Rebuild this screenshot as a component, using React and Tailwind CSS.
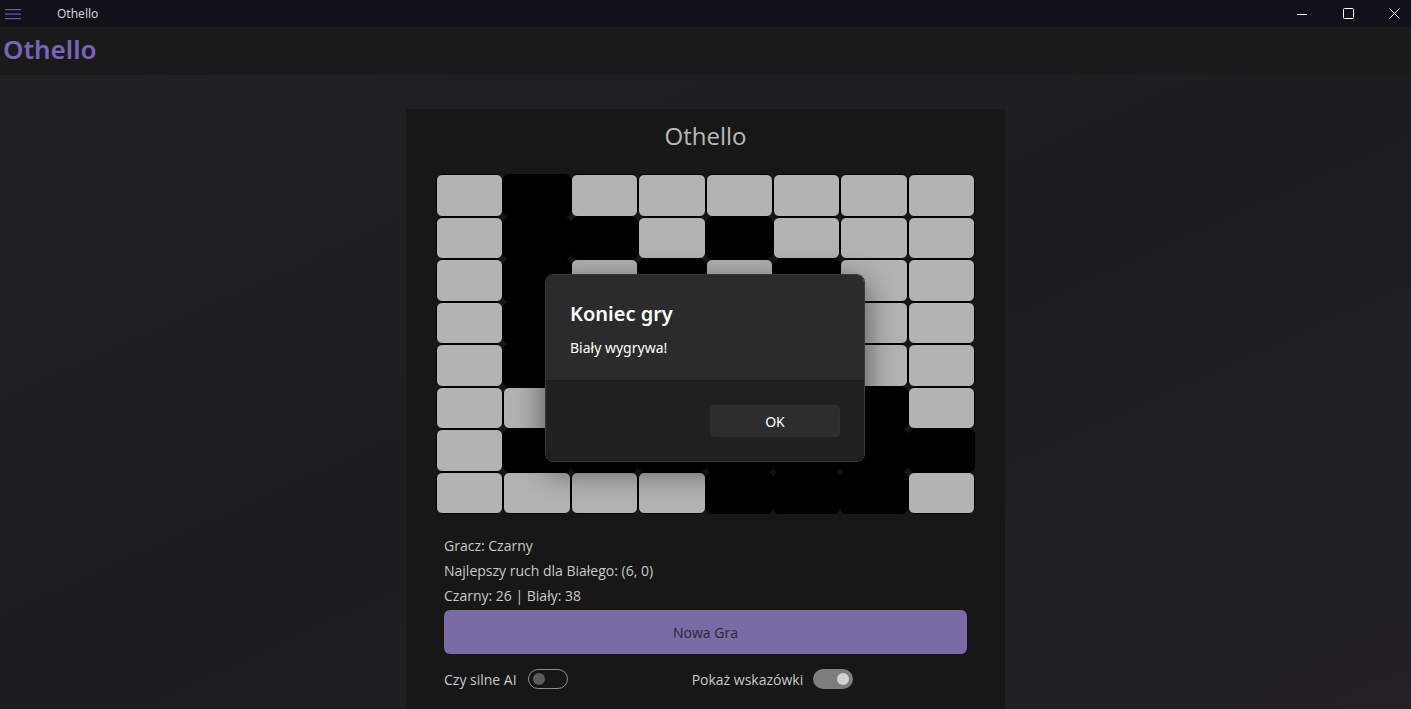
import React from "react";

const BOARD = [
  "wbwwwwww",
  "wbbwbwww",
  "wbwbwbww",
  "wbwwbwww",
  "wbwbwbww",
  "wwbwbwbw",
  "wbbbbbbb",
  "wwwwbbbw",
];

function Cell({ v }) {
  return (
    <div
      className={
        "rounded-[6px] border border-black " +
        (v === "w" ? "bg-[#b3b3b3]" : "bg-black")
      }
    />
  );
}

export default function App() {
  return (
    <div
      className="relative w-[1411px] h-[709px] overflow-hidden flex flex-col bg-[#1f1e22]"
      style={{ fontFamily: '"Open Sans", "Noto Sans", sans-serif' }}
    >
      {/* Title bar */}
      <div className="h-[27px] shrink-0 flex items-center bg-[#121119]">
        <div className="w-[27px] flex justify-center">
          <svg width="16" height="12" viewBox="0 0 16 12" className="ml-[-1px]">
            <rect x="0" y="1" width="16" height="1.2" fill="#6a58b4" />
            <rect x="0" y="5.5" width="16" height="1.2" fill="#6a58b4" />
            <rect x="0" y="10" width="16" height="1.2" fill="#6a58b4" />
          </svg>
        </div>
        <span
          className="ml-[30px] text-[12px] text-[#d0d0d0]"
          style={{ fontFamily: '"Noto Sans", sans-serif' }}
        >
          Othello
        </span>
        <div className="ml-auto mr-[-6px] flex h-full">
          <div className="w-[46px] flex items-center justify-center">
            <svg width="10" height="10" viewBox="0 0 10 10">
              <line x1="0" y1="5.5" x2="10" y2="5.5" stroke="#fff" strokeWidth="1" />
            </svg>
          </div>
          <div className="w-[46px] flex items-center justify-center">
            <svg width="11" height="11" viewBox="0 0 11 11">
              <rect x="0.5" y="0.5" width="10" height="10" rx="1" fill="none" stroke="#fff" strokeWidth="1" />
            </svg>
          </div>
          <div className="w-[46px] flex items-center justify-center">
            <svg width="11" height="11" viewBox="0 0 11 11">
              <path d="M0.5 0.5 L10.5 10.5 M10.5 0.5 L0.5 10.5" stroke="#fff" strokeWidth="1" />
            </svg>
          </div>
        </div>
      </div>

      {/* Header */}
      <div className="h-[48px] shrink-0 flex items-center bg-[#1a1a1a] px-[3px] pb-[4px]">
        <span
          className="text-[26px] font-semibold text-[#7a64b8] leading-none"
          style={{ fontFamily: '"Noto Sans", "Open Sans", sans-serif' }}
        >
          Othello
        </span>
      </div>

      {/* Main */}
      <div className="flex-1 flex justify-center pt-[34px] bg-gradient-to-br from-[#212024] via-[#1d1d20] to-[#232126]">
        <div className="w-[599px] bg-[#171717] flex flex-col items-center">
          <div className="mt-[12px] text-[24px] leading-[30px] text-[#b9b9b9]">Othello</div>
          <div className="mt-[23px] w-[539px] h-[340px] grid grid-cols-8 grid-rows-8">
            {BOARD.flatMap((row, r) =>
              row.split("").map((v, c) => <Cell key={r + "-" + c} v={v} />)
            )}
          </div>
          <div className="w-[523px] mt-[19px] flex flex-col text-[14px] text-[#c9c9c9]">
            <div className="h-[25px] leading-[25px]">Gracz: Czarny</div>
            <div className="h-[25px] leading-[25px]">Najlepszy ruch dla Białego: (6, 0)</div>
            <div className="h-[25px] leading-[25px]">Czarny: 26 | Biały: 38</div>
            <div className="mt-[2px] h-[44px] rounded-[6px] bg-[#7a6aa6] flex items-center justify-center text-[#2a2733]">
              Nowa Gra
            </div>
            <div className="mt-[15px] flex items-center h-[20px]">
              <span>Czy silne AI</span>
              <div className="ml-[11px] w-[40px] h-[20px] rounded-full border border-[#8d8d8d] flex items-center px-[4px]">
                <div className="w-[12px] h-[12px] rounded-full bg-[#5c5c5c]" />
              </div>
              <span className="ml-[124px]">Pokaż wskazówki</span>
              <div className="ml-[10px] w-[40px] h-[20px] rounded-full bg-[#7d7d7d] flex items-center justify-end px-[4px]">
                <div className="w-[12px] h-[12px] rounded-full bg-[#d2d2d2]" />
              </div>
            </div>
          </div>
        </div>
      </div>

      {/* Dialog */}
      <div className="absolute left-0 right-0 top-[27px] bottom-0 flex items-center justify-center">
        <div
          className="w-[320px] h-[188px] ml-[-1px] rounded-[8px] border border-[#3a3a3a] overflow-hidden flex flex-col shadow-[0_8px_32px_rgba(0,0,0,0.55)]"
          style={{ fontFamily: '"Noto Sans", "Open Sans", sans-serif' }}
        >
          <div className="h-[105px] bg-[#2b2b2b] px-[24px] pt-[25px]">
            <div className="text-[20px] font-semibold text-white leading-[28px]">Koniec gry</div>
            <div className="mt-[10px] text-[14px] text-white leading-[20px]">Biały wygrywa!</div>
          </div>
          <div className="flex-1 bg-[#202020] border-t border-[#1c1c1c] flex justify-end items-start pt-[24px] pr-[24px]">
            <div className="w-[130px] h-[32px] rounded-[4px] bg-[#2d2d2d] border border-[#303030] flex items-center justify-center text-[14px] text-white">
              OK
            </div>
          </div>
        </div>
      </div>
    </div>
  );
}
